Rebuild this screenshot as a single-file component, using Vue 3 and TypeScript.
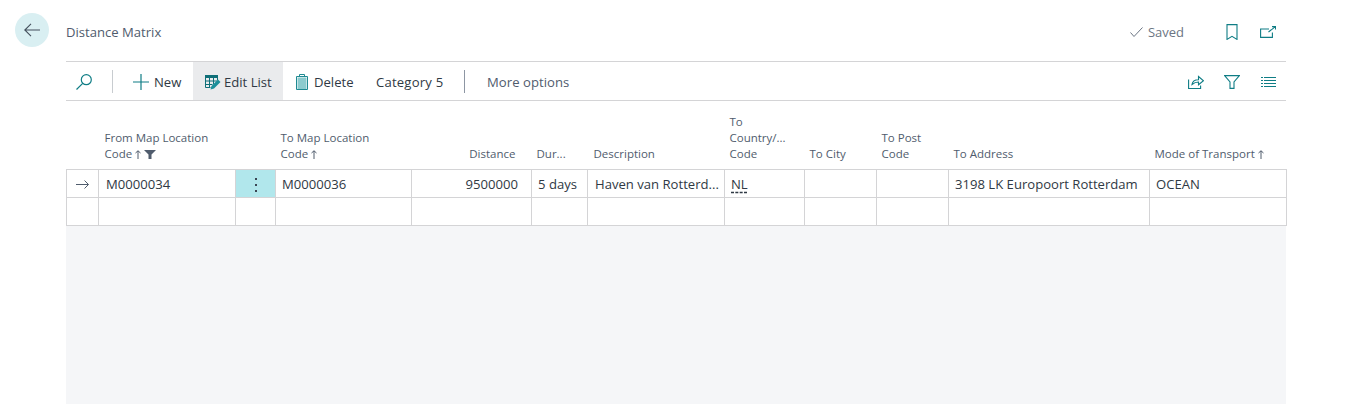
<script setup lang="ts">
interface Col { w: number; label: string[]; right?: boolean; sort?: boolean; filter?: boolean }
const cols: Col[] = [
  { w: 32, label: [] },
  { w: 137, label: ['From Map Location', 'Code'], sort: true, filter: true },
  { w: 40, label: [] },
  { w: 136, label: ['To Map Location', 'Code'], sort: true },
  { w: 120, label: ['Distance'], right: true },
  { w: 56, label: ['Dur...'] },
  { w: 137, label: ['Description'] },
  { w: 80, label: ['To', 'Country/...', 'Code'] },
  { w: 72, label: ['To City'] },
  { w: 72, label: ['To Post', 'Code'] },
  { w: 201, label: ['To Address'] },
  { w: 137, label: ['Mode of Transport'], sort: true },
]
</script>

<template>
  <div class="page">
    <div class="gutter">
      <button class="back" aria-label="Back">
        <svg width="16" height="14" viewBox="0 0 16 14" fill="none" stroke="#444f5c" stroke-width="1.1">
          <path d="M.8 7H16M7 .8.800 7 7 13.200" />
        </svg>
      </button>
    </div>
    <div class="main">
      <header class="title-row">
        <span class="title">Distance Matrix</span>
        <span class="saved">
          <svg width="13" height="10" viewBox="0 0 13 10" fill="none" stroke="#6b7583" stroke-width="1"><path d="M.5 5.500l3.500 4L12.500 .5" /></svg>
          Saved
        </span>
        <svg class="hicon bm" width="12" height="16" viewBox="0 0 12 16" fill="none" stroke="#0f7d85" stroke-width="1.1"><path d="M1 .6h10v14.800l-5-3-5 3z" /></svg>
        <svg class="hicon op" width="16" height="12" viewBox="0 0 16 12" fill="none" stroke="#0f7d85" stroke-width="1.1"><path d="M9 3H.6v8.400h11.800V6.500M8.500 6 15.500 .6M12 .6h3.500V3.500" /></svg>
      </header>

      <nav class="toolbar">
        <span class="tool search">
          <svg width="16" height="16" viewBox="0 0 16 16" fill="none" stroke="#0f7d85" stroke-width="1.2"><circle cx="10.300" cy="5.700" r="5" /><path d="M6.700 9.300 .5 15.500" /></svg>
        </span>
        <span class="sep first"></span>
        <span class="tool new">
          <svg width="16" height="16" viewBox="0 0 16 16" fill="none" stroke="#0f7d85" stroke-width="1.2"><path d="M8 0v16M0 8h16" /></svg>
          New
        </span>
        <span class="tool edit">
          <svg width="16" height="15" viewBox="0 0 16 15">
            <path fill="#0f6f78" d="M0 0h13v3H0z" />
            <path fill="none" stroke="#0f6f78" d="M.5 3v9.500h5M4.500 3v9.500M8.500 3v6M.5 6h12M.5 9.500h7M12.500 3v2" />
            <path fill="#1b8f9a" d="M5.500 14.500l1-3.500 6.500-6.500 2.500 2.500-6.500 6.500z" />
          </svg>
          Edit List
        </span>
        <span class="tool del">
          <svg width="12" height="16" viewBox="0 0 12 16">
            <path fill="#8ccbce" d="M1.500 3.500h9v12h-9z" />
            <path fill="none" stroke="#1f8a92" d="M.5 2.500h11v13H.5zM3.500 2.500V.5h5v2" />
          </svg>
          Delete
        </span>
        <span class="tool cat">Category 5</span>
        <span class="sep second"></span>
        <span class="tool more">More options</span>
        <span class="right">
          <svg width="16" height="14" viewBox="0 0 16 14" fill="none" stroke="#0f7d85" stroke-width="1.1"><path d="M.6 4.500v9h12V10.500M4 9.500c.5-3.500 3-4.800 6.500-4.800V1.500l5 4.300-5 4V7C8 7 6 7.800 4 9.500z" /></svg>
          <svg width="16" height="14" viewBox="0 0 16 14" fill="none" stroke="#0f7d85" stroke-width="1.1"><path d="M.6 .6h14.800L10 7v6.400H6V7z" /></svg>
          <svg class="list" width="15" height="11" viewBox="0 0 15 11" stroke="#0f7d85" stroke-width="1" fill="none"><path d="M0 .500h2M3 .500h12M0 3.500h2M3 3.500h12M0 6.500h2M3 6.500h12M0 9.500h2M3 9.500h12" /></svg>
        </span>
      </nav>

      <table class="grid">
        <colgroup><col v-for="(c, i) in cols" :key="i" :style="{ width: c.w + 'px' }" /></colgroup>
        <thead>
          <tr>
            <th v-for="(c, i) in cols" :key="i" :class="{ r: c.right }">
              <div v-for="(l, j) in c.label" :key="j" class="hl">
                {{ l }}
                <template v-if="j === c.label.length - 1">
                  <svg v-if="c.sort" class="arrow" width="6" height="9" viewBox="0 0 6 9" fill="none" stroke="#505c6d" stroke-width="1"><path d="M3 9V.8M.5 3 3 .8 5.500 3" /></svg>
                  <svg v-if="c.filter" class="funnel" width="12" height="9" viewBox="0 0 12 9"><path fill="#505c6d" d="M0 0h12L7.500 4.500V9h-3V4.500z" /></svg>
                </template>
              </div>
            </th>
          </tr>
        </thead>
        <tbody>
          <tr>
            <td class="ind">
              <svg width="13" height="9" viewBox="0 0 13 9" fill="none" stroke="#505c6d" stroke-width="1"><path d="M0 4.500h12.300M8.500 .5l4 4-4 4" /></svg>
            </td>
            <td class="wide">M0000034</td>
            <td class="menu"><span class="dots"><i></i><i></i><i></i></span></td>
            <td>M0000036</td>
            <td class="r">9500000</td>
            <td>5 days</td>
            <td class="wide">Haven van Rotterd...</td>
            <td class="nl"><span>NL</span></td>
            <td></td>
            <td></td>
            <td>3198 LK Europoort Rotterdam</td>
            <td>OCEAN</td>
          </tr>
          <tr>
            <td v-for="(c, i) in cols" :key="i"></td>
          </tr>
        </tbody>
      </table>
      <div class="rest"></div>
    </div>
  </div>
</template>

<style>
html, body { margin: 0; background: #fff; }
</style>

<style scoped>
.page {
  display: flex;
  height: 404px;
  overflow: hidden;
  font-family: "Open Sans", "Noto Sans", sans-serif;
  font-size: 13px;
  color: #2f3944;
}
.gutter { width: 66px; flex: none; padding: 13px 0 0 15px; box-sizing: border-box; }
.back {
  width: 34px; height: 34px; border: 0; padding: 0; border-radius: 50%;
  background: #d9eff2; display: flex; align-items: center; justify-content: center;
}
.main { width: 1220px; flex: none; display: flex; flex-direction: column; }
.title-row { height: 61px; display: flex; align-items: center; padding-top: 2px; box-sizing: border-box; }
.title { font-size: 13.100px; color: #505c6d; }
.saved { margin-left: auto; display: flex; align-items: center; gap: 5px; color: #6b7583; font-size: 13px; }
.hicon.bm { margin-left: 42px; }
.hicon.op { margin-left: 22px; margin-right: 10px; }
.toolbar {
  height: 40px; box-sizing: border-box;
  border-top: 1px solid #d4d4d6; border-bottom: 1px solid #d4d4d6;
  display: flex; align-items: stretch;
}
.tool { display: flex; align-items: center; gap: 5px; font-size: 13.100px; white-space: nowrap; padding-top: 2px; box-sizing: border-box; }
.search { margin-left: 10px; width: 18px; }
.sep { width: 1px; height: 23px; background: #c8ccd0; align-self: center; }
.sep.first { margin-left: 18px; }
.new { margin-left: 20px; width: 60px; }
.edit { width: 90px; padding-left: 12px; gap: 3px; background: #eaebed; }
.del { margin-left: 13px; width: 69px; gap: 6px; }
.cat { margin-left: 11px; width: 67px; letter-spacing: 0.2px; }
.sep.second { margin-left: 21px; background: #8d96a3; }
.more { margin-left: 22px; color: #505c6d; letter-spacing: 0.05px; }
.right { margin-left: auto; display: flex; align-items: center; gap: 20px; padding: 2px 10px 0 0; }
.list { margin-left: 1px; }
.grid { border-collapse: collapse; table-layout: fixed; width: 1220px; flex: none; }
th {
  height: 68px; box-sizing: border-box; vertical-align: bottom; text-align: left;
  font-weight: 400; font-size: 11.500px; color: #505c6d; padding: 0 4px 7px 5px; border: 0;
}
th.r { text-align: right; padding-right: 16px; }
th:nth-child(2), th:nth-child(7) { padding-left: 6px; }
.hl { line-height: 16px; white-space: nowrap; }
.arrow { vertical-align: -1px; }
.funnel { vertical-align: -1px; margin-left: 3px; }
td {
  height: 28px; box-sizing: border-box; padding: 1px 6px 0; border: 1px solid #d4d4d6;
  font-size: 13.100px; white-space: nowrap; overflow: hidden;
}
td.wide { padding-left: 7px; }
td.r { text-align: right; padding-right: 13px; }
.ind { text-align: center; padding: 0; }
.ind svg { vertical-align: middle; }
.menu { background: #b1e7ec; padding: 0; text-align: center; }
.dots { display: inline-flex; flex-direction: column; gap: 4px; vertical-align: middle; }
.dots i { display: block; width: 2px; height: 2px; background: #3a4654; }
.nl span { text-decoration: underline dashed #2f3944; text-underline-offset: 3px; }
.rest { flex: 1; background: #f5f6f8; }
</style>
